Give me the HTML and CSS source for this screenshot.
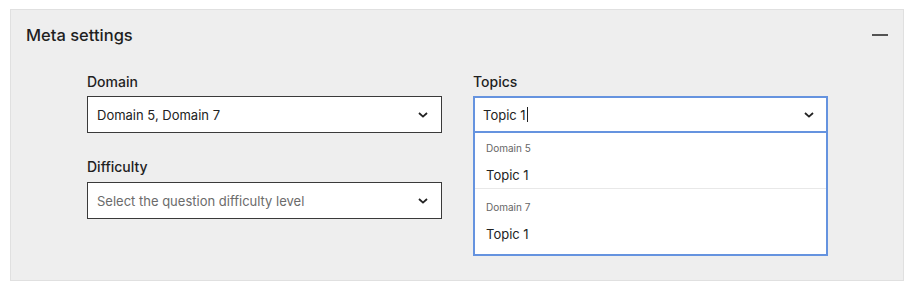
FILE: index.html
```html
<!DOCTYPE html>
<html lang="en">
<head>
<meta charset="utf-8">
<title>Meta settings</title>
<link rel="stylesheet" href="styles.css">
</head>
<body>
<section class="panel">
  <header class="panel-header">
    <h2 class="panel-title">Meta settings</h2>
    <button class="collapse" aria-label="Collapse">
      <svg width="16" height="4" viewBox="0 0 16 4"><line x1="0" y1="2" x2="16" y2="2" stroke="#1f1f1f" stroke-width="1.5"/></svg>
    </button>
  </header>
  <div class="form-grid">
    <div class="column">
      <div class="field">
        <label class="label">Domain</label>
        <div class="select">
          <span class="value">Domain 5, Domain 7</span>
          <svg class="chevron" width="10" height="6" viewBox="0 0 10 6"><path d="M1 1 L5 4.6 L9 1" fill="none" stroke="#222" stroke-width="1.8"/></svg>
        </div>
      </div>
      <div class="field field-second">
        <label class="label">Difficulty</label>
        <div class="select">
          <span class="value placeholder">Select the question difficulty level</span>
          <svg class="chevron" width="10" height="6" viewBox="0 0 10 6"><path d="M1 1 L5 4.6 L9 1" fill="none" stroke="#222" stroke-width="1.8"/></svg>
        </div>
      </div>
    </div>
    <div class="column">
      <div class="field">
        <label class="label">Topics</label>
        <div class="combo">
          <div class="select select-open">
            <span class="value">Topic 1<span class="caret"></span></span>
            <svg class="chevron" width="10" height="6" viewBox="0 0 10 6"><path d="M1 1 L5 4.6 L9 1" fill="none" stroke="#222" stroke-width="1.8"/></svg>
          </div>
          <div class="menu">
            <div class="group">
              <div class="group-title">Domain 5</div>
              <div class="option">Topic 1</div>
            </div>
            <div class="group">
              <div class="group-title">Domain 7</div>
              <div class="option">Topic 1</div>
            </div>
          </div>
        </div>
      </div>
    </div>
  </div>
</section>
</body>
</html>
```

FILE: styles.css
```css
* { box-sizing: border-box; }

html, body {
  margin: 0;
  padding: 0;
  background: #ffffff;
}

body {
  font-family: Inter, "Noto Sans", "Liberation Sans", sans-serif;
  color: #222222;
}

.panel {
  margin: 9px 11px 0 10px;
  height: 272px;
  background: #eeeeee;
  border: 1px solid #e0e0e0;
  padding: 13px 15px 0 15px;
}

.panel-header {
  display: flex;
  align-items: center;
  justify-content: space-between;
  height: 24px;
}

.panel-title {
  margin: 0;
  font-size: 16.5px;
  line-height: 24px;
  font-weight: 500;
  color: #1f1f1f;
}

.collapse {
  border: 0;
  background: none;
  padding: 0;
  display: flex;
  width: 16px;
  height: 4px;
}

.form-grid {
  display: grid;
  grid-template-columns: 355px 355px;
  column-gap: 31px;
  margin: 25px 0 0 61px;
}

.column {
  display: flex;
  flex-direction: column;
}

.field {
  display: flex;
  flex-direction: column;
}

.field-second {
  margin-top: 24px;
}

.label {
  font-size: 14px;
  line-height: 20px;
  font-weight: 500;
  color: #1f1f1f;
  margin-bottom: 4px;
}

.field-second .label {
  margin-bottom: 5px;
}

.select {
  height: 37px;
  background: #ffffff;
  border: 1px solid #3a3a3a;
  display: flex;
  align-items: center;
  justify-content: space-between;
  padding: 0 13px 0 9px;
}

.value {
  font-size: 13px;
  line-height: 16px;
  color: #222222;
  display: flex;
  align-items: center;
}

.placeholder {
  color: #6b6b6b;
}

.chevron {
  display: block;
}

.combo {
  position: relative;
}

.select-open {
  border: 2px solid #6593df;
  padding-left: 8px;
  padding-right: 12px;
}

.caret {
  display: inline-block;
  width: 1px;
  height: 15px;
  background: #222;
  margin-left: 1px;
}

.menu {
  position: absolute;
  left: 0;
  right: 0;
  top: 35px;
  background: #ffffff;
  border: 2px solid #6593df;
}

.group {
  padding: 7px 0 0 11px;
}

.group + .group {
  border-top: 1px solid #e8e8e8;
  padding-top: 10px;
}

.group-title {
  font-size: 10px;
  line-height: 14px;
  color: #666666;
  padding-top: 1px;
}

.option {
  font-size: 13px;
  line-height: 16px;
  color: #222222;
  padding: 12px 0 5px;
}

.group:last-child .option {
  padding-bottom: 12px;
}
```
